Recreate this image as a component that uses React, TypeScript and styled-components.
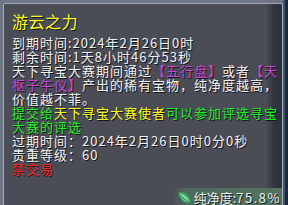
import { FC } from "react";
import styled, { createGlobalStyle } from "styled-components";

const GlobalStyle = createGlobalStyle`
  html, body {
    margin: 0;
    padding: 0;
    background: #6e7585;
    overflow: hidden;
  }
`;

const Screen = styled.div`
  display: flex;
  width: 288px;
  height: 205px;
  padding: 3px 0 0 3px;
  box-sizing: border-box;
  overflow: hidden;
`;

const Tooltip = styled.div`
  width: 280px;
  height: 210px;
  flex-shrink: 0;
  box-sizing: border-box;
  border: 1px solid #a3aab6;
  border-radius: 2px;
  padding: 7px 0 0 8px;
  background: linear-gradient(
    90deg,
    #4a4c56 0,
    #4a4c56 262px,
    #2f3641 270px,
    #2b323d 100%
  );
  font-family: "Noto Sans CJK SC", "Noto Sans", sans-serif;
  color: #f2f2f2;
  text-shadow: 1px 1px 0 #15171c;
  display: flex;
  flex-direction: column;
`;

const Frame = styled.div`
  flex: 1;
  margin-top: -3px;
  background: #1d2836;
  border-left: 2px solid #3f5570;
`;

const Title = styled.div`
  font-size: 16px;
  line-height: 20px;
  letter-spacing: 0.5px;
  color: #ffff22;
  margin-bottom: 5px;
`;

const Body = styled.div`
  width: 270px;
  font-size: 13px;
  line-height: 14px;
  letter-spacing: 1px;
`;

const Line = styled.div``;

const Tint = styled.span<{ $color: string }>`
  color: ${(p) => p.$color};
`;

const Footer = styled.div`
  display: flex;
  justify-content: flex-end;
  margin-top: 12px;
  width: 270px;
`;

const Purity = styled.div`
  display: flex;
  align-items: center;
  gap: 2px;
  height: 19px;
  padding: 0 1px 0 5px;
  white-space: nowrap;
  background: linear-gradient(
    90deg,
    rgba(80, 112, 96, 0) 0,
    rgba(80, 112, 96, 0.85) 14px,
    #55715f 100%
  );
  font-size: 13px;
  color: #e6f2ea;
`;

const PurityValue = styled.span`
  letter-spacing: 1.5px;
`;

const Leaf: FC = () => (
  <svg width="15" height="15" viewBox="0 0 15 15">
    <path
      d="M1.5 2.5 C7 1.5 12.5 4 13.5 12.5 C8 13.5 2.5 10 1.5 2.5 Z"
      fill="#3fae6a"
    />
    <path
      d="M3 4 C7 5 10.5 8 12 11.5 C9 8.5 6 6 3 4 Z"
      fill="#c8f0d4"
    />
    <path d="M4 6 C5 9 8 11 11 12 C7 11.5 5 9.5 4 6 Z" fill="#8ee0a8" />
  </svg>
);

const App: FC = () => {
  const white = "#f2f2f2";
  const purple = "#d044d4";
  const green = "#22ee22";
  const yellow = "#ffff22";

  return (
    <>
      <GlobalStyle />
      <Screen>
        <Tooltip>
          <Title>游云之力</Title>
          <Body>
            <Line>到期时间:2024年2月26日0时</Line>
            <Line>剩余时间:1天8小时46分53秒</Line>
            <Line>
              <Tint $color={white}>天下寻宝大赛期间通过</Tint>
              <Tint $color={purple}>【五行盘】</Tint>
              <Tint $color={white}>或者</Tint>
              <Tint $color={purple}>【天枢子午仪】</Tint>
              <Tint $color={white}>产出的稀有宝物，纯净度越高，价值越不菲。</Tint>
            </Line>
            <Line>
              <Tint $color={green}>提交给</Tint>
              <Tint $color={yellow}>天下寻宝大赛使者</Tint>
              <Tint $color={green}>可以参加评选寻宝大赛的评选</Tint>
            </Line>
            <Line>过期时间：2024年2月26日0时0分0秒</Line>
            <Line>贵重等级：60</Line>
            <Line>
              <Tint $color="#ff2222">禁交易</Tint>
            </Line>
          </Body>
          <Footer>
            <Purity>
              <Leaf />
              <span>
                纯净度:<PurityValue>75.8%</PurityValue>
              </span>
            </Purity>
          </Footer>
        </Tooltip>
        <Frame />
      </Screen>
    </>
  );
};

export default App;
